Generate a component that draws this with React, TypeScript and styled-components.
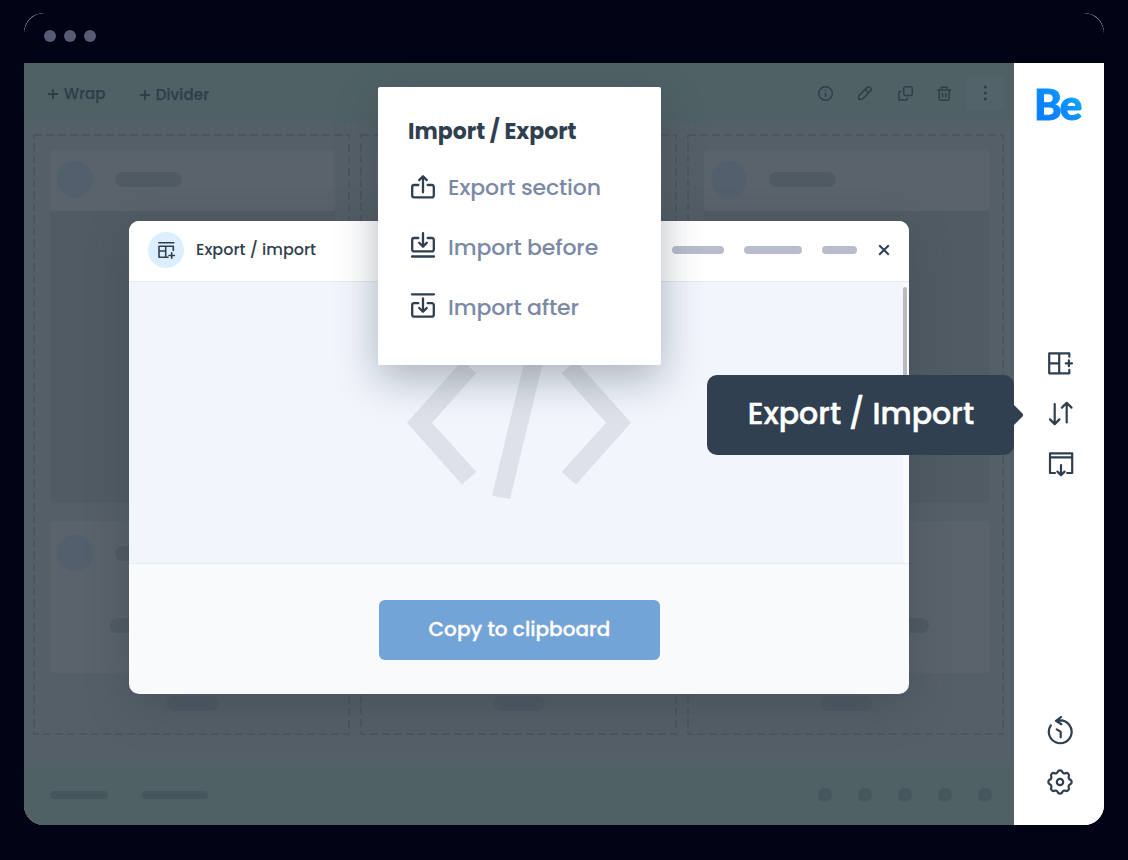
import React from "react";
import styled, { createGlobalStyle } from "styled-components";

const ink = "#2f3f50";
const dim = "#2f3e4b";

const GlobalStyle = createGlobalStyle`
  * { box-sizing: border-box; }
  body {
    margin: 0;
    background: #000414;
    font-family: Poppins, Inter, "Liberation Sans", sans-serif;
    color: ${ink};
  }
  svg { display: block; flex: none; }
`;

const Page = styled.div`
  width: 1128px;
  height: 860px;
  padding: 13px 24px 35px;
  overflow: hidden;
`;

const Window = styled.div`
  position: relative;
  height: 812px;
  display: flex;
  flex-direction: column;
  border-radius: 20px;
  background: #fff;
`;

const TitleBar = styled.div`
  flex: none;
  height: 50px;
  padding: 0 0 4px 20px;
  display: flex;
  align-items: center;
  gap: 8px;
  background: #000414;
  border-radius: 20.5px 20.5px 0 0;
`;

const Dot = styled.span<{ $size: number; $color: string }>`
  width: ${(p) => p.$size}px;
  height: ${(p) => p.$size}px;
  border-radius: 50%;
  background: ${(p) => p.$color};
`;

const Body = styled.div`
  flex: 1;
  display: flex;
  min-height: 0;
`;

const Canvas = styled.main`
  width: 990px;
  display: flex;
  flex-direction: column;
  background: #555f68;
  border-radius: 0 0 0 20px;
  overflow: hidden;
`;

const Toolbar = styled.div`
  height: 60px;
  flex: none;
  padding: 0 10px 0 24px;
  display: flex;
  align-items: center;
  justify-content: space-between;
  background: #4f6165;
`;

const ToolGroup = styled.div<{ $gap: number }>`
  display: flex;
  align-items: center;
  gap: ${(p) => p.$gap}px;
`;

const ToolButton = styled.div<{ $top: number }>`
  padding-top: ${(p) => p.$top}px;
  display: flex;
  align-items: center;
  gap: 6px;
  color: ${dim};
  font-size: 15px;
  font-weight: 500;
  line-height: 20px;
  letter-spacing: 0.15px;
  -webkit-text-stroke: 0.25px ${dim};
`;

const MoreButton = styled.div`
  width: 38px;
  height: 34px;
  margin-left: -9px;
  display: grid;
  place-items: center;
  border-radius: 4px;
  background: #53636a;
`;

const Columns = styled.div`
  flex: 1;
  padding: 11px 10px 30px 9px;
  display: flex;
  gap: 10px;
`;

const Column = styled.div`
  position: relative;
  flex: 1;
  padding: 16px 15px 0 17px;
  display: flex;
  flex-direction: column;
`;

const DashedFrame = styled.svg`
  position: absolute;
  inset: 0;
`;

const Card = styled.div<{ $height: number }>`
  height: ${(p) => p.$height}px;
  border-radius: 3px;
  background: #5a626c;
`;

const CardHead = styled.div<{ $top: number }>`
  padding: ${(p) => p.$top}px 0 0 7px;
  display: flex;
  align-items: center;
  gap: 22px;
`;

const ImageBlock = styled.div`
  height: 292px;
  margin-bottom: 18px;
  background: #515b64;
`;

const Pill = styled.div<{ $w: number; $h?: number; $color?: string }>`
  width: ${(p) => p.$w}px;
  height: ${(p) => p.$h ?? 15}px;
  border-radius: ${(p) => (p.$h ?? 15) / 2}px;
  background: ${(p) => p.$color ?? "#505a63"};
`;

const CardLine = styled.div`
  display: flex;
  justify-content: center;
  padding-top: 47px;
`;

const ColumnLine = styled.div`
  display: flex;
  justify-content: center;
  padding-top: 23px;
`;

const Footer = styled.div`
  height: 60px;
  flex: none;
  padding: 0 22px 0 26px;
  display: flex;
  align-items: center;
  justify-content: space-between;
  background: #4f6165;
`;

const Sidebar = styled.aside`
  width: 90px;
  padding: 18px 0 29px;
  display: flex;
  flex-direction: column;
  background: #fff;
  border-radius: 0 0 20px 0;
`;

const Logo = styled.div`
  width: 60px;
  height: 46px;
  margin-left: 20px;
  font-family: Lato, sans-serif;
  font-size: 42px;
  font-weight: 900;
  line-height: 47px;
  letter-spacing: -1.7px;
  color: transparent;
  -webkit-text-stroke: 1px transparent;
  background: linear-gradient(45deg, #0a80ff 25%, #0c90fc 50%, #16b4f8 85%);
  background-clip: text;
  -webkit-background-clip: text;
`;

const NavGroup = styled.nav<{ $top: string; $gap: number }>`
  margin-top: ${(p) => p.$top};
  padding-left: 31px;
  display: flex;
  flex-direction: column;
  gap: ${(p) => p.$gap}px;
`;

const Dialog = styled.section`
  position: absolute;
  left: 105px;
  top: 208px;
  width: 780px;
  height: 473px;
  display: flex;
  flex-direction: column;
  border-radius: 10px;
  overflow: hidden;
  background: #f9fafc;
`;

const DialogShadow = styled.div`
  position: absolute;
  left: 105px;
  top: 208px;
  width: 780px;
  height: 473px;
  border-radius: 10px;
  box-shadow: 0 12px 40px rgba(56, 66, 76, 0.4);
`;

const DialogHeader = styled.header`
  height: 61px;
  flex: none;
  padding: 0 19px 3px 19px;
  display: flex;
  align-items: center;
  justify-content: space-between;
  background: #fff;
  border-bottom: 1px solid #e6eaf1;
`;

const DialogTitle = styled.div`
  display: flex;
  align-items: center;
  gap: 12px;
  font-size: 16px;
  font-weight: 500;
`;

const Badge = styled.div`
  width: 36px;
  height: 36px;
  border-radius: 50%;
  background: #dceeff;
`;

const Tabs = styled.div`
  display: flex;
  align-items: center;
  gap: 20px;
`;

const CloseIcon = styled.svg`
  margin-left: 1px;
`;

const DialogBody = styled.div`
  height: 281px;
  flex: none;
  display: flex;
  align-items: center;
  justify-content: space-between;
  padding-left: 278px;
  background: #f1f5fc;
`;

const Track = styled.div`
  width: 6px;
  height: 100%;
  padding-top: 5px;
  background: #f9fafc;
`;

const Thumb = styled.div`
  width: 4px;
  height: 150px;
  border-radius: 2px;
  background: #b9babc;
`;

const DialogFooter = styled.footer`
  flex: 1;
  padding-top: 36px;
  display: flex;
  justify-content: center;
  border-top: 1px solid #e6ecf6;
`;

const CopyButton = styled.button`
  width: 281px;
  height: 60px;
  margin-left: 1px;
  padding: 0 0 2px;
  border: 0;
  border-radius: 6px;
  background: #73a4d7;
  color: #fff;
  font: inherit;
  font-size: 20px;
  font-weight: 500;
  letter-spacing: 0.03px;
  -webkit-text-stroke: 0.3px #fff;
`;

const Menu = styled.div`
  position: absolute;
  left: 354px;
  top: 74px;
  width: 283px;
  height: 278px;
  padding: 27px 30px 0;
  border-radius: 2px;
  background: #fff;
  box-shadow: 0 14px 40px rgba(47, 63, 75, 0.36);
`;

const MenuTitle = styled.h2`
  margin: 0 0 8px;
  font-size: 22px;
  line-height: 36px;
  font-weight: 700;
  white-space: nowrap;
`;

const MenuItem = styled.div`
  height: 60px;
  padding-bottom: 2px;
  display: flex;
  align-items: center;
  gap: 10px;
  color: #7c89a6;
  font-size: 22px;
  font-weight: 500;
  letter-spacing: -0.13px;
  white-space: nowrap;
`;

const Tooltip = styled.div`
  position: absolute;
  left: 683px;
  top: 362px;
  width: 307px;
  height: 80px;
  padding: 0 0 3px 1px;
  display: flex;
  align-items: center;
  justify-content: center;
  border-radius: 10px;
  background: #304051;
  color: #fff;
  font-size: 30px;
  font-weight: 500;
  white-space: nowrap;
  letter-spacing: 0.08px;
  -webkit-text-stroke: 0.5px #fff;
`;

const TooltipArrow = styled.svg`
  position: absolute;
  left: 306px;
  top: 29px;
`;

function Icon({ d, size = 30, color = ink, width = 2.2, children }: {
  d?: string; size?: number; color?: string; width?: number; children?: React.ReactNode;
}) {
  return (
    <svg width={size} height={size} viewBox={`0 0 ${size} ${size}`} fill="none" stroke={color}
      strokeWidth={width} strokeLinecap="round" strokeLinejoin="round">
      {d && <path d={d} />}
      {children}
    </svg>
  );
}

/* Eight round lobes joined by small concave arcs. */
const gearPath = (() => {
  const at = (r: number, deg: number) => {
    const a = (deg * Math.PI) / 180;
    return `${(15 + r * Math.sin(a)).toFixed(2)} ${(16 - r * Math.cos(a)).toFixed(2)}`;
  };
  let path = `M${at(10.4, -13)}`;
  for (let i = 0; i < 8; i++) {
    path += `A2.45 2.2 ${i * 45} 0 1 ${at(10.4, i * 45 + 13)}A2.3 2.3 0 0 0 ${at(10.4, i * 45 + 32)}`;
  }
  return `${path}Z`;
})();

const Plus = () => (
  <svg width="10" height="10" viewBox="0 0 10 10" stroke={dim} strokeWidth="1.8">
    <path d="M5 0v10M0 5h10" />
  </svg>
);

function ContentColumn() {
  return (
    <Column>
      <DashedFrame width="317" height="601" fill="none" stroke="#4b555e" strokeWidth="2" strokeDasharray="8 4">
        <rect x="1" y="1" width="315" height="599" />
      </DashedFrame>
      <Card $height={61}>
        <CardHead $top={11}>
          <Dot $size={36} $color="#52606d" />
          <Pill $w={67} />
        </CardHead>
      </Card>
      <ImageBlock />
      <Card $height={152}>
        <CardHead $top={14}>
          <Dot $size={36} $color="#52606d" />
          <Pill $w={67} />
        </CardHead>
        <CardLine>
          <Pill $w={165} />
        </CardLine>
      </Card>
      <ColumnLine>
        <Pill $w={51} $color="#4f5963" />
      </ColumnLine>
    </Column>
  );
}

export default function App() {
  return (
    <>
      <GlobalStyle />
      <Page>
        <Window>
          <TitleBar>
            {[0, 1, 2].map((i) => <Dot key={i} $size={12} $color="#575c74" />)}
          </TitleBar>
          <Body>
            <Canvas>
              <Toolbar>
                <ToolGroup $gap={34}>
                  <ToolButton $top={1}><Plus />Wrap</ToolButton>
                  <ToolButton $top={3}><Plus />Divider</ToolButton>
                </ToolGroup>
                <ToolGroup $gap={20}>
                  <Icon size={20} color={dim} width={1.5}>
                    <circle cx="10.5" cy="10.5" r="6.8" />
                    <path d="M10.5 10.2v3.4M10.5 7.4v.2" />
                  </Icon>
                  <Icon size={20} color={dim} width={1.5}
                    d="M3.7 16.3V12.8L11.9 4.6a2.45 2.45 0 0 1 3.5 3.5L7.2 16.3H3.7zM10.2 6.3l3.5 3.5" />
                  <Icon size={20} color={dim} width={1.5}>
                    <rect x="8.7" y="3.8" width="8.6" height="8.6" rx="1.3" />
                    <path d="M5.7 8.5h-.6a1.3 1.3 0 0 0-1.3 1.3v6a1.3 1.3 0 0 0 1.3 1.3h6a1.3 1.3 0 0 0 1.3-1.3v-.6" />
                  </Icon>
                  <Icon size={20} color={dim} width={1.5}
                    d="M2.6 6.9h13.2M6.4 6.7V4.2H12v2.5M4.2 7.2v8.7a1.3 1.3 0 0 0 1.3 1.3h7.4a1.3 1.3 0 0 0 1.3-1.3V7.2M7.6 10.4v3.5M10.8 10.4v3.5" />
                  <MoreButton>
                    <svg width="4" height="16" viewBox="0 0 4 16" fill={dim}>
                      <circle cx="2.3" cy="2" r="1.6" />
                      <circle cx="2.3" cy="8" r="1.6" />
                      <circle cx="2.3" cy="14" r="1.6" />
                    </svg>
                  </MoreButton>
                </ToolGroup>
              </Toolbar>
              <Columns>
                <ContentColumn />
                <ContentColumn />
                <ContentColumn />
              </Columns>
              <Footer>
                <ToolGroup $gap={34}>
                  <Pill $w={58} $h={8} $color="#45565d" />
                  <Pill $w={66} $h={8} $color="#45565d" />
                </ToolGroup>
                <ToolGroup $gap={26}>
                  {[0, 1, 2, 3, 4].map((i) => <Dot key={i} $size={14} $color="#45565d" />)}
                </ToolGroup>
              </Footer>
            </Canvas>
            <Sidebar>
              <Logo>Be</Logo>
              <NavGroup $top="221px" $gap={20}>
                <Icon d="M24.3 8.7V5.3H4.2v20h20.1v-3.4M14.2 5.3v20M4.2 15.3h10M20.8 15.3h6.2M23.9 12.4v5.8" />
                <Icon d="M9.7 6v20M5 21.4l4.7 4.7 4.7-4.7M21.7 24.4V5M16.9 9.6l4.8-4.8 4.8 4.8" />
                <Icon d="M10 25H5V5.3h22.2V25h-5M5 9.3h22M16 17v9.8M12.4 23.6l3.6 3.5 3.6-3.5" />
              </NavGroup>
              <NavGroup $top="auto" $gap={21}>
                <Icon d="M5.8 10.4A11.4 11.4 0 1 0 15.5 5.4L11 5.9M16 2l-5 3.9 5.4 3.3M11.8 14.3l3.9 2.6v5.4" />
                <Icon d={gearPath}>
                  <circle cx="15" cy="16" r="3.2" />
                </Icon>
              </NavGroup>
            </Sidebar>
          </Body>

          <DialogShadow />
          <Dialog>
            <DialogHeader>
              <DialogTitle>
                <Badge>
                  <Icon size={36} width={1.6}
                    d="M10.8 10.8h15M25.3 18.5V14.3H11v11h9M17.7 14.3v11M11 19h6.7M23.7 20.8v5.4M21 23.5h5.4" />
                </Badge>
                Export / import
              </DialogTitle>
              <Tabs>
                <Pill $w={52} $h={8} $color="#b8bdcd" />
                <Pill $w={58} $h={8} $color="#b8bdcd" />
                <Pill $w={35} $h={8} $color="#b8bdcd" />
                <CloseIcon width="12" height="12" viewBox="0 0 12 12" stroke={ink} strokeWidth="2">
                  <path d="M1.2 1.2l9.6 9.6M10.8 1.2l-9.6 9.6" />
                </CloseIcon>
              </Tabs>
            </DialogHeader>
            <DialogBody>
              <svg width="224" height="156" viewBox="407 345 224 156" fill="#dde1e9">
                <path d="M407 422.7L462 361l14.3 12L432 422.7 476.3 472 462 484.5z" />
                <path d="M631 422.7L576 361l-14.3 12L606 422.7 561.7 472 576 484.5z" />
                <path d="M492 495.7l18 3.3L546 350l-18-4z" />
              </svg>
              <Track><Thumb /></Track>
            </DialogBody>
            <DialogFooter>
              <CopyButton>Copy to clipboard</CopyButton>
            </DialogFooter>
          </Dialog>

          <Menu>
            <MenuTitle>Import / Export</MenuTitle>
            <MenuItem>
              <Icon width={2.3} d="M10.3 13H6a1.8 1.8 0 0 0-1.8 1.8v8.8A1.8 1.8 0 0 0 6 25.4h18a1.8 1.8 0 0 0 1.8-1.8v-8.8A1.8 1.8 0 0 0 24 13h-4.3M15 20.3V4.3M11.2 8.1L15 4.3l3.8 3.8" />
              Export section
            </MenuItem>
            <MenuItem>
              <Icon width={2.3} d="M10.3 6H6a1.8 1.8 0 0 0-1.8 1.8v9.8A1.8 1.8 0 0 0 6 19.4h18a1.8 1.8 0 0 0 1.8-1.8V7.8A1.8 1.8 0 0 0 24 6h-4.3M15 1.2v13.2M11.2 10.8l3.8 3.8 3.8-3.8M4 24.5h22" />
              Import before
            </MenuItem>
            <MenuItem>
              <Icon width={2.3} d="M10.3 11.2H6A1.8 1.8 0 0 0 4.2 13v9.8A1.8 1.8 0 0 0 6 24.6h18a1.8 1.8 0 0 0 1.8-1.8V13a1.8 1.8 0 0 0-1.8-1.8h-4.3M15 6.5v13M11.2 16l3.8 3.8 3.8-3.8M4 2.3h22" />
              Import after
            </MenuItem>
          </Menu>

          <Tooltip>
            Export / Import
            <TooltipArrow width="11" height="22" viewBox="0 0 11 22" fill="#304051">
              <path d="M0 0l9.5 9.6q1.2 1.4 0 2.8L0 22z" />
            </TooltipArrow>
          </Tooltip>
        </Window>
      </Page>
    </>
  );
}
